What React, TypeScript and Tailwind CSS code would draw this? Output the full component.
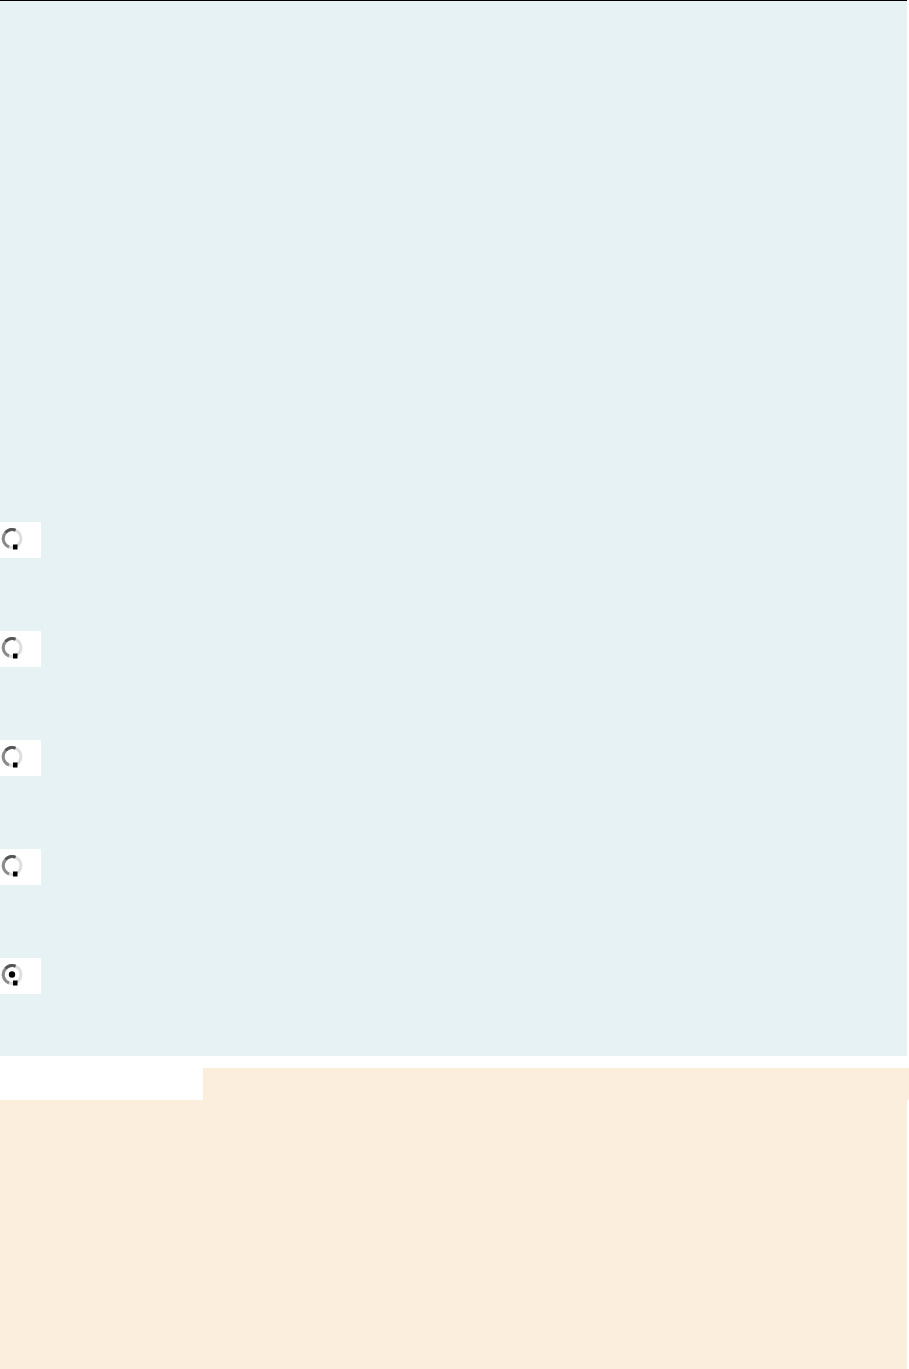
import React from "react";

function Radio({ checked }: { checked?: boolean }) {
  return (
    <svg width="24" height="36" viewBox="0 0 24 36" className="block">
      <circle cx="12" cy="16.5" r="9" fill="#fff" stroke="#dedede" strokeWidth="3" />
      <path d="M15.5 8.2 A9 9 0 0 0 9 25" fill="none" stroke="#8a8a8a" strokeWidth="3" />
      <path d="M15.5 8.2 A9 9 0 0 0 5.5 10.5" fill="none" stroke="#555" strokeWidth="2.6" />
      <rect x="13" y="22.5" width="4.5" height="5" fill="#000" />
      {checked && <circle cx="12" cy="16.5" r="3.2" fill="#000" />}
    </svg>
  );
}

export default function App() {
  const opts = [false, false, false, false, true];
  return (
    <div className="w-[909px] bg-white">
      <div className="w-[907px] border-t border-black bg-[#e7f2f4] pt-[521px] pb-[62px]">
        <div className="flex flex-col gap-[73px]">
          {opts.map((c, i) => (
            <div key={i} className="w-[41px] h-[36px] bg-white">
              <Radio checked={c} />
            </div>
          ))}
        </div>
      </div>
      <div className="h-[12px]" />
      <div className="flex h-[32px]">
        <div className="w-[203px] bg-white" />
        <div className="flex-1 bg-[#fbeedc]" />
      </div>
      <div className="w-[907px] h-[269px] bg-[#fbeedc]" />
    </div>
  );
}
